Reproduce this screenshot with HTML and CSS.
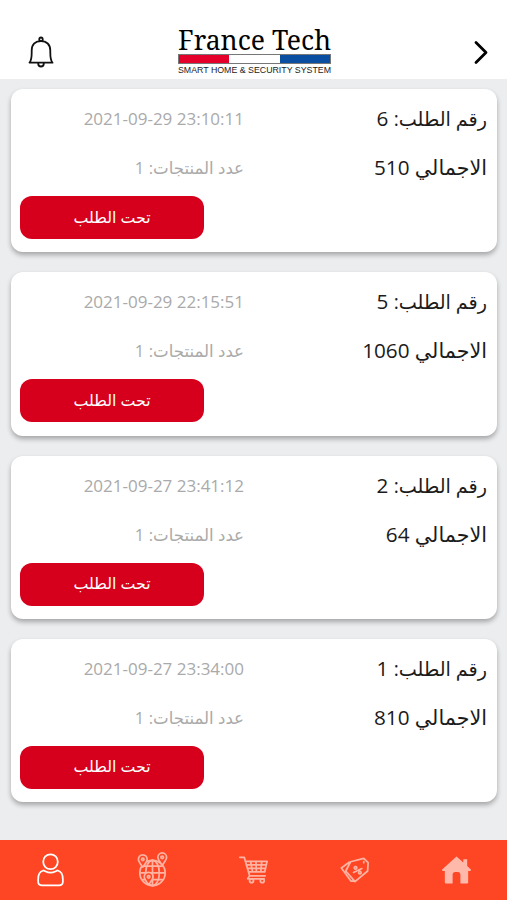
FILE: index.html
```html
<!DOCTYPE html>
<html lang="ar" dir="rtl">
<head>
<meta charset="utf-8">
<title>France Tech</title>
<link rel="stylesheet" href="styles.css">
</head>
<body>
<header class="top">
  <svg class="chevron" viewBox="0 0 18 26"><path d="M4 3.500 14 13.500 4 23.500"/></svg>
  <div class="logo" dir="ltr">
    <svg class="brand" viewBox="0 0 154 24"><text x="0" y="20" textLength="153" lengthAdjust="spacingAndGlyphs">France Tech</text></svg>
    <div class="flag"><i class="red"></i><i class="white"></i><i class="blue"></i></div>
    <svg class="tagline" viewBox="0 0 154 12"><text x="0" y="8.5" textLength="153" lengthAdjust="spacingAndGlyphs">SMART HOME &amp; SECURITY SYSTEM</text></svg>
  </div>
  <svg class="bell" viewBox="0 0 26 32"><path d="M1.500 26.700H24.500C22 24 22.300 20 22.300 14.500C22.300 8.500 18.500 5 13 5S3.700 8.500 3.700 14.500C3.700 20 4 24 1.500 26.700ZM11.300 5V3.200a1.700 1.700 0 0 1 3.400 0V5M10.200 27.500a2.800 3 0 0 0 5.600 0"/></svg>
</header>
<main class="orders">
  <article class="card">
    <div class="main"><p><span class="label">رقم الطلب:</span> 6</p><p>الاجمالي 510</p></div>
    <div class="side"><p class="date" dir="ltr">2021-09-29 23:10:11</p><p class="count">عدد المنتجات: 1</p><button class="status">تحت الطلب</button></div>
  </article>
  <article class="card">
    <div class="main"><p><span class="label">رقم الطلب:</span> 5</p><p>الاجمالي 1060</p></div>
    <div class="side"><p class="date" dir="ltr">2021-09-29 22:15:51</p><p class="count">عدد المنتجات: 1</p><button class="status">تحت الطلب</button></div>
  </article>
  <article class="card">
    <div class="main"><p><span class="label">رقم الطلب:</span> 2</p><p>الاجمالي 64</p></div>
    <div class="side"><p class="date" dir="ltr">2021-09-27 23:41:12</p><p class="count">عدد المنتجات: 1</p><button class="status">تحت الطلب</button></div>
  </article>
  <article class="card">
    <div class="main"><p><span class="label">رقم الطلب:</span> 1</p><p>الاجمالي 810</p></div>
    <div class="side"><p class="date" dir="ltr">2021-09-27 23:34:00</p><p class="count">عدد المنتجات: 1</p><button class="status">تحت الطلب</button></div>
  </article>
</main>
<nav class="tabs">
  <a><svg class="home" viewBox="0 0 36 36"><path d="M18 4 3.500 17.200c-.8.800-.3 1.800.7 1.800H6v11.500c0 1 .7 1.500 1.500 1.500H14v-9c0-2 1-3 2.500-3h3c1.500 0 2.500 1 2.500 3v9h6.500c.8 0 1.500-.5 1.500-1.500V19h1.800c1 0 1.500-1 .7-1.800L29 14V7h-4v3.300Z"/></svg></a>
  <a><svg class="line" viewBox="0 0 36 36"><path d="M14 9.500 27.500 6 32 10.500 31.500 19 18.500 30 9 19ZM12.500 10 4.500 16 14.500 29.500 18.500 29.500M17 20.500 25.500 16.500M19 14.500a1.300 1.300 0 1 0 .1 0M23.500 19.500a1.300 1.300 0 1 0 .1 0M27.500 9.500v1"/></svg></a>
  <a><svg class="line cart" viewBox="0 0 36 36"><path d="M4 5h4.500L14 24H30M9.500 9H32L29.500 20H13M10.500 12.700H31M11.700 16.400H30M15 9l2 11M20.500 9l.5 11M26.500 9l-1 11M14 24l-2 3H29"/><circle cx="16" cy="29" r="2"/><circle cx="27" cy="29" r="2"/></svg></a>
  <a><svg class="line" viewBox="0 0 36 36"><circle cx="18" cy="21" r="13"/><path d="M18 8v26M5 21h26M8 14h20M8 28h20"/><ellipse cx="18" cy="21" rx="7" ry="13"/><g class="pin"><path d="M8 15C5 11 3.500 9.500 3.500 7a4.500 4.500 0 0 1 9 0C12.500 9.500 11 11 8 15ZM28 13c-3-4-4.500-5.500-4.500-8a4.500 4.500 0 0 1 9 0c0 2.500-1.500 4-4.500 8ZM14 33c-3-4-4.500-5.500-4.500-8a4.500 4.500 0 0 1 9 0c0 2.500-1.500 4-4.500 8Z"/><circle cx="8" cy="7" r="1.300"/><circle cx="28" cy="5" r="1.300"/><circle cx="14" cy="25" r="1.300"/></g></svg></a>
  <a><svg class="user" viewBox="0 0 36 36"><ellipse cx="18" cy="9.500" rx="7.500" ry="7.700"/><path d="M10.500 18.500C7 19.500 5.300 23 5.300 27.500V30c0 2.500 1.500 3.700 4 3.700h17.400c2.500 0 4-1.200 4-3.700v-2.500c0-4.500-1.700-8-5.200-9-1.500 0-3.500 2.300-7.500 2.300s-6-2.300-7.500-2.300Z"/></svg></a>
</nav>
</body>
</html>
```

FILE: styles.css
```css
* { box-sizing: border-box; }
body { margin: 0; height: 900px; display: flex; flex-direction: column; overflow: hidden; background: #ebedef; color: #1b1b1b; font-family: "Open Sans", "DejaVu Sans", sans-serif; }
p { margin: 0; white-space: nowrap; }
.top { height: 79px; flex: none; background: #fff; display: grid; grid-template-columns: 158px 154px 1fr; align-items: start; padding: 0 17px 0 28px; }
.chevron { width: 18px; height: 26px; margin-top: 39px; fill: none; stroke: #000; stroke-width: 2.8; stroke-linecap: round; stroke-linejoin: round; }
.bell { width: 26px; height: 32px; margin-top: 36px; justify-self: end; fill: none; stroke: #111; stroke-width: 1.8; stroke-linejoin: round; }
.logo { width: 154px; margin-top: 30px; display: flex; flex-direction: column; }
.brand { width: 154px; height: 24px; overflow: visible; font: 27px "Noto Serif", "Liberation Serif", serif; }
.tagline { width: 154px; height: 12px; overflow: visible; font: 9px "Liberation Sans", sans-serif; fill: #222; }
.flag { display: flex; width: 153px; height: 10px; border: 1px solid #777; }
.flag i { flex: 1; }
.red { background: #e4002b; }
.white { background: #fff; }
.blue { background: #0a4ea2; }
.orders { flex: 1; padding: 10px 10px 0 11px; display: flex; flex-direction: column; gap: 20px; }
.card { height: 163.3px; flex: none; display: grid; grid-template-columns: 243px 1fr; background: #fff; border-radius: 12px; box-shadow: 0 3px 5px rgba(0,0,0,.3); padding: 5px 10px 0 9px; }
.main p { height: 49px; line-height: 49px; font-size: 20.700px; }
.main .label { font-size: 19.200px; }
.side p { height: 49px; line-height: 49px; font-size: 17px; color: #aaa; }
.side .count { font-size: 16.600px; }
.side .date { text-align: right; }
.status { display: block; width: 184px; height: 43px; margin: 4px auto 0 0; padding: 0 0 2px; border: 0; border-radius: 12px; background: #d6001c; color: #fff; font: 15.800px "Open Sans", "DejaVu Sans", sans-serif; }
.tabs { height: 60px; flex: none; background: #ff4624; display: grid; grid-template-columns: repeat(5, 1fr); }
.tabs a { display: flex; align-items: center; justify-content: center; }
.tabs svg { width: 35px; height: 36px; fill: none; stroke: #fff; stroke-width: 1.8; stroke-linejoin: round; stroke-linecap: round; }
.tabs .line { stroke: #ffb3a3; }
.tabs .home { fill: #ffb9ab; stroke: none; }
.tabs .pin { fill: #ff4624; }
```
